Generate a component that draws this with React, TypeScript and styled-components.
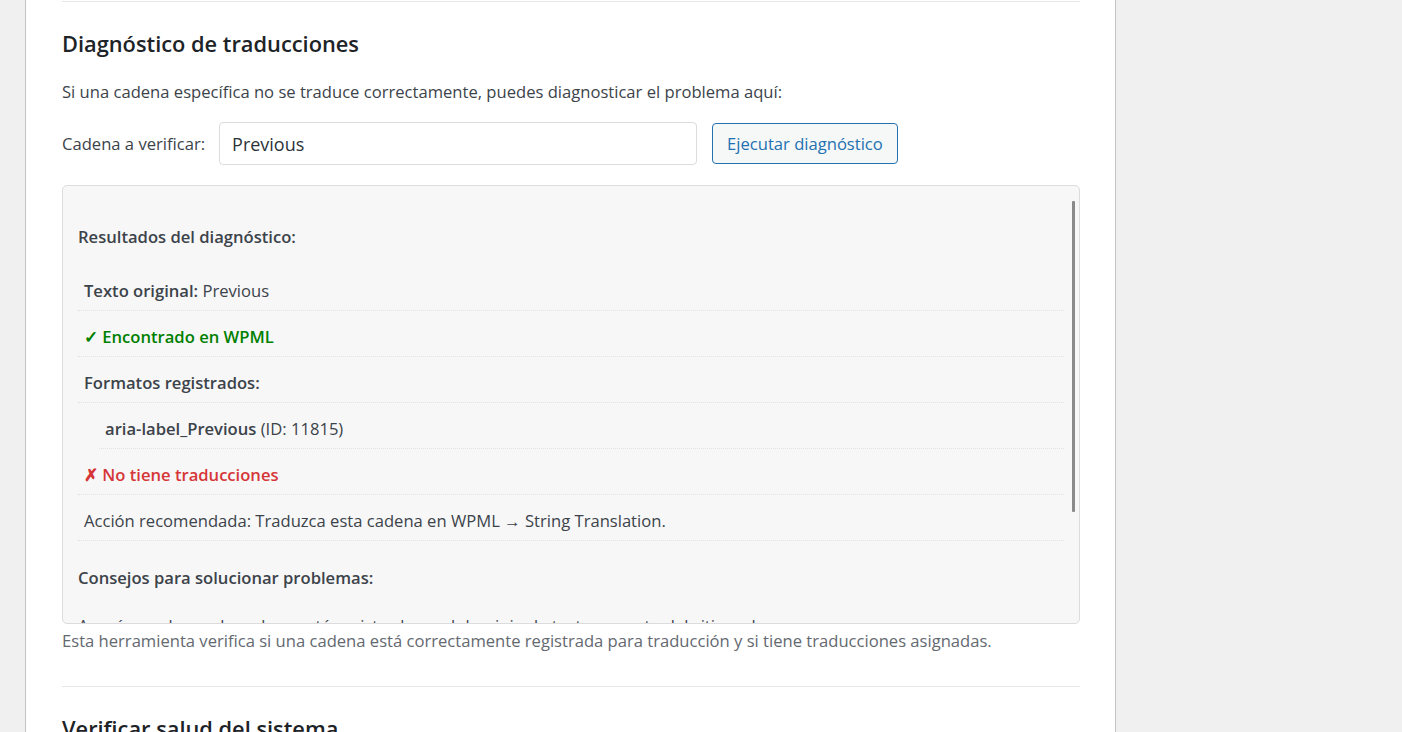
import * as React from 'react';
import styled, { createGlobalStyle } from 'styled-components';

const GlobalStyle = createGlobalStyle`
  html, body {
    margin: 0;
    padding: 0;
    background: #f0f0f1;
    font-family: 'Open Sans', 'Noto Sans', sans-serif;
    color: #3c434a;
  }
`;

const Page = styled.div`
  display: flex;
  height: 732px;
  overflow: hidden;
  padding-left: 25px;
`;

const Panel = styled.div`
  box-sizing: border-box;
  width: 1091px;
  background: #fff;
  border-left: 1px solid #c3c4c7;
  border-right: 1px solid #c3c4c7;
  padding: 1px 35px 0 36px;
`;

const Divider = styled.hr`
  border: 0;
  height: 1px;
  background: #e6e6e6;
  margin: 0;
`;

const Section = styled.section`
  display: flex;
  flex-direction: column;
`;

const Heading = styled.h2`
  margin: 27px 0 0;
  font-size: 21.8px;
  line-height: 29px;
  font-weight: 600;
  color: #1d2327;
`;

const Intro = styled.p`
  margin: 22px 0 0;
  font-size: 16.6px;
  line-height: 24px;
`;

const FormRow = styled.div`
  display: flex;
  align-items: center;
  margin-top: 18px;
`;

const Label = styled.label`
  font-size: 16.6px;
  line-height: 24px;
  margin-right: 14px;
`;

const Input = styled.input`
  box-sizing: border-box;
  width: 478px;
  height: 43px;
  padding: 0 12px;
  border: 1px solid #dcdcde;
  border-radius: 4px;
  font-family: inherit;
  font-size: 18px;
  color: #2c3338;
  outline: none;
`;

const Button = styled.button`
  box-sizing: border-box;
  height: 41px;
  margin-left: 15px;
  padding: 0 14px;
  border: 1px solid #2271b1;
  border-radius: 4px;
  background: #f6f7f7;
  color: #2271b1;
  font-family: inherit;
  font-size: 16.6px;
  cursor: pointer;
`;

const ResultBox = styled.div`
  position: relative;
  box-sizing: border-box;
  height: 439px;
  margin-top: 20px;
  padding: 0 15px;
  background: #f7f7f7;
  border: 1px solid #dcdcde;
  border-radius: 5px;
  overflow: hidden;
  font-size: 16.6px;
  line-height: 22px;
`;

const ScrollThumb = styled.div`
  position: absolute;
  top: 15px;
  right: 4px;
  width: 3px;
  height: 311px;
  border-radius: 1px;
  background: #8a8a8a;
`;

const BoxTitle = styled.h4<{ $top: number }>`
  margin: ${p => p.$top}px 0 24px;
  font-size: 16.6px;
  line-height: 22px;
  font-weight: 600;
  color: #3c434a;
`;

const ResultRow = styled.div<{ $tone?: 'ok' | 'error'; $indent?: boolean }>`
  margin-top: 7px;
  margin-left: ${p => (p.$indent ? '21px' : '0')};
  padding: 8px 6px;
  border-bottom: 1px dotted #e2e2e2;
  font-weight: ${p => (p.$tone ? 600 : 400)};
  color: ${p => (p.$tone === 'ok' ? '#008000' : p.$tone === 'error' ? '#d63638' : '#3c434a')};
`;

const Strong = styled.strong`
  font-weight: 600;
`;

const Tip = styled.p`
  margin: 26px 0 0;
`;

const Note = styled.p`
  margin: 5px 0 0;
  font-size: 16.6px;
  line-height: 24px;
  color: #646970;
`;

const SectionDivider = styled(Divider)`
  margin-top: 33px;
`;

export default function App() {
  return (
    <>
      <GlobalStyle />
      <Page>
        <Panel>
          <Divider />
          <Section>
            <Heading>Diagnóstico de traducciones</Heading>
            <Intro>Si una cadena específica no se traduce correctamente, puedes diagnosticar el problema aquí:</Intro>
            <FormRow>
              <Label htmlFor="diag-string">Cadena a verificar:</Label>
              <Input id="diag-string" defaultValue="Previous" />
              <Button type="button">Ejecutar diagnóstico</Button>
            </FormRow>
            <ResultBox>
              <ScrollThumb />
              <BoxTitle $top={40}>Resultados del diagnóstico:</BoxTitle>
              <ResultRow>
                <Strong>Texto original:</Strong> Previous
              </ResultRow>
              <ResultRow $tone="ok">✓ Encontrado en WPML</ResultRow>
              <ResultRow>
                <Strong>Formatos registrados:</Strong>
              </ResultRow>
              <ResultRow $indent>
                <Strong>aria-label_Previous</Strong> (ID: 11815)
              </ResultRow>
              <ResultRow $tone="error">✗ No tiene traducciones</ResultRow>
              <ResultRow>Acción recomendada: Traduzca esta cadena en WPML → String Translation.</ResultRow>
              <BoxTitle $top={26}>Consejos para solucionar problemas:</BoxTitle>
              <Tip>Asegúrese de que la cadena esté registrada en el dominio de texto correcto del sitio web.</Tip>
            </ResultBox>
            <Note>
              Esta herramienta verifica si una cadena está correctamente registrada para traducción y si tiene traducciones asignadas.
            </Note>
          </Section>
          <SectionDivider />
          <Section>
            <Heading>Verificar salud del sistema</Heading>
          </Section>
        </Panel>
      </Page>
    </>
  );
}
